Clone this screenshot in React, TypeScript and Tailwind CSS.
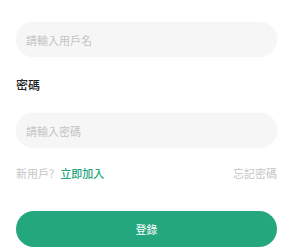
import React from "react";

const font = { fontFamily: '"Noto Sans CJK TC", "Noto Sans", sans-serif' };

const Field = ({ label, placeholder, type = "text" }: { label: string; placeholder: string; type?: string }) => (
  <div className="flex flex-col">
    <label className="text-[12px] leading-4 font-medium text-[#222]">{label}</label>
    <input
      type={type}
      placeholder={placeholder}
      className="mt-5 h-[35px] w-full rounded-full bg-[#f6f6f6] px-[10px] text-[11px] text-[#333] outline-none placeholder:text-[#c4c4c4] shadow-[0_0_2px_rgba(0,0,0,0.04)]"
    />
  </div>
);

export default function App() {
  return (
    <div className="h-[250px] w-[293px] overflow-hidden bg-white" style={font}>
      <div className="-mt-[14px] px-4">
        <Field label="用戶名" placeholder="請輸入用戶名" />
        <div className="mt-[20px]">
          <Field label="密碼" placeholder="請輸入密碼" type="password" />
        </div>
        <div className="mt-[17px] flex items-center justify-between text-[11px] leading-4">
          <div className="flex items-center gap-[6px]">
            <span className="text-[#c6c6c6]">新用戶?</span>
            <span className="font-medium text-[#26a47e]">立即加入</span>
          </div>
          <span className="text-[#c6c6c6]">忘記密碼</span>
        </div>
        <button className="mt-[30px] h-[36px] w-full rounded-full bg-[#24a67e] text-[11px] text-white">
          登錄
        </button>
      </div>
    </div>
  );
}
